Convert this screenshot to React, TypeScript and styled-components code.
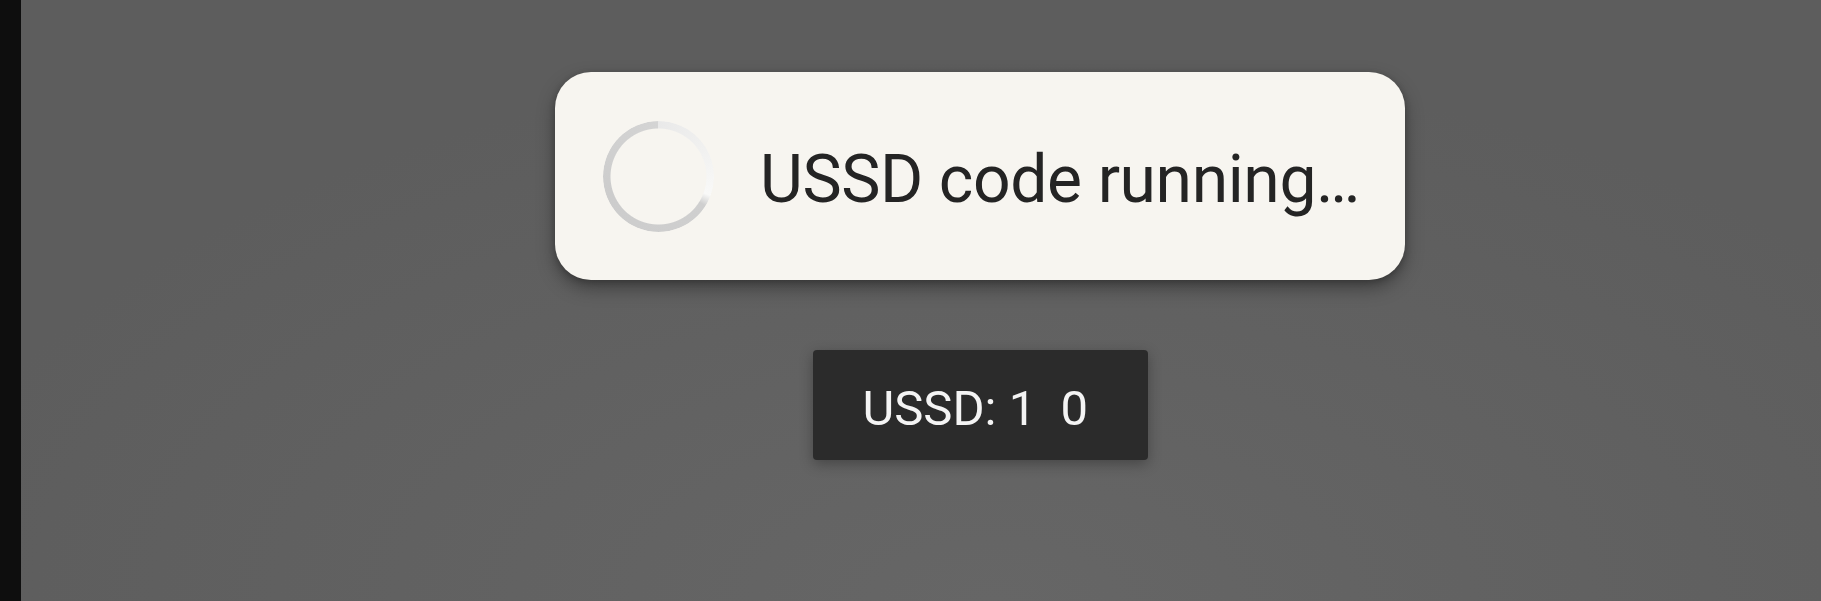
import styled, { createGlobalStyle } from 'styled-components'

const GlobalStyle = createGlobalStyle`
  html, body {
    margin: 0;
    padding: 0;
    width: 1821px;
    height: 601px;
    overflow: hidden;
    background: #5f5f5f;
    font-family: Roboto, 'Noto Sans', sans-serif;
  }
`

const Screen = styled.div`
  display: flex;
  width: 1821px;
  height: 601px;
`

const SideStrip = styled.div`
  width: 21px;
  flex-shrink: 0;
  background: #0e0e0e;
`

const Stage = styled.div`
  flex: 1;
  display: flex;
  flex-direction: column;
  align-items: center;
  padding: 72px 0 0 118px;
  gap: 70px;
  background: radial-gradient(ellipse 60% 90% at 54% 100%, #666666 0%, #616161 55%, #5d5d5d 100%);
`

const Dialog = styled.div`
  width: 850px;
  height: 208px;
  box-sizing: border-box;
  display: flex;
  align-items: center;
  padding: 0 0 0 48px;
  gap: 46px;
  background: #f7f5f0;
  border-radius: 36px;
  box-shadow: 0 8px 18px rgba(0, 0, 0, 0.35), 0 2px 6px rgba(0, 0, 0, 0.2);
`

const Spinner = styled.div`
  width: 111px;
  height: 111px;
  flex-shrink: 0;
  border-radius: 50%;
  background: conic-gradient(
    #e9e9e9 0deg,
    #f1f1f0 60deg,
    #f9f9f8 110deg,
    #cfcfcf 122deg,
    #cccccc 250deg,
    #d4d4d4 360deg
  );
  -webkit-mask: radial-gradient(farthest-side, transparent calc(100% - 8px), #000 calc(100% - 7px));
  mask: radial-gradient(farthest-side, transparent calc(100% - 8px), #000 calc(100% - 7px));
  filter: blur(0.6px);
`

const Message = styled.span`
  margin-top: 7px;
  font-size: 66px;
  color: #242424;
  letter-spacing: -0.4px;
  white-space: nowrap;
`

const Toast = styled.div`
  width: 335px;
  height: 110px;
  box-sizing: border-box;
  display: flex;
  align-items: center;
  padding: 7px 0 0 50px;
  background: #2b2b2b;
  border-radius: 4px;
  box-shadow: 0 4px 14px rgba(0, 0, 0, 0.3);
`

const ToastText = styled.span`
  font-size: 49px;
  color: #f4f4f4;
  white-space: pre;
`

export default function App() {
  return (
    <Screen>
      <GlobalStyle />
      <SideStrip />
      <Stage>
        <Dialog>
          <Spinner />
          <Message>USSD code running…</Message>
        </Dialog>
        <Toast>
          <ToastText>{'USSD: 1  0'}</ToastText>
        </Toast>
      </Stage>
    </Screen>
  )
}
